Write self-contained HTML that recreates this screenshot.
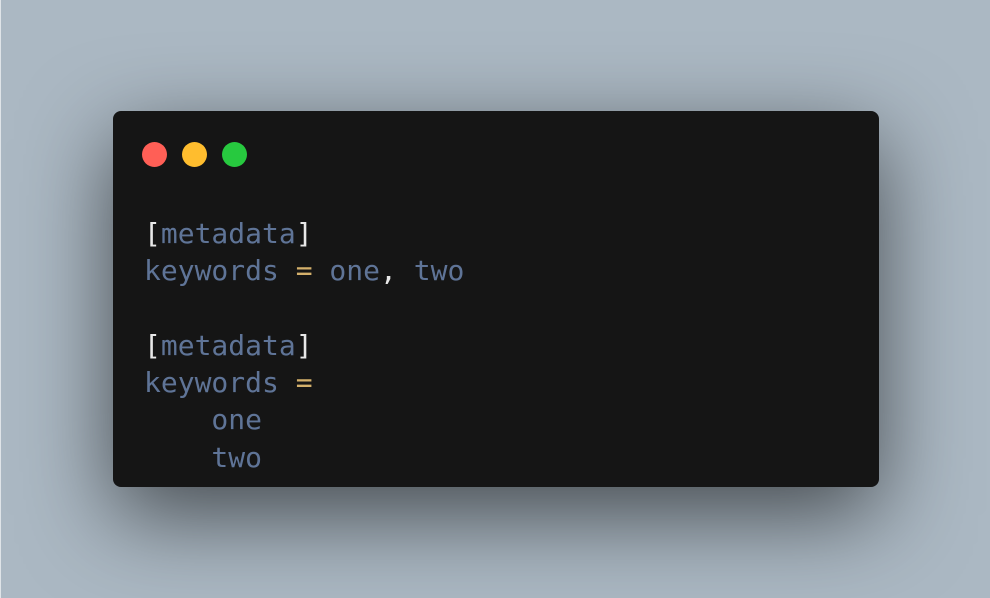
<!DOCTYPE html>
<html><head><meta charset="utf-8"><style>
html,body{margin:0;padding:0}
body{width:990px;height:598px;background:#abb8c3;position:relative;overflow:hidden;border-left:1px solid #dfe4e8;box-sizing:border-box}
.win{position:absolute;left:112px;top:111px;width:766px;height:376px;background:#151515;border-radius:8px;box-shadow:0 28px 90px rgba(0,0,0,0.6)}
.dot{position:absolute;top:31px;width:25px;height:25px;border-radius:50%}
pre{position:absolute;left:31px;top:104px;margin:0;font-family:"DejaVu Sans Mono","Liberation Mono",monospace;font-size:28px;line-height:37.3px;color:#5f7497}
.b{color:#e8e8e8}.e{color:#d4b06b}.c{color:#e8e8e8}
</style></head><body>
<div class="win">
<div class="dot" style="left:29px;background:#ff5f56"></div>
<div class="dot" style="left:69px;background:#ffbd2e"></div>
<div class="dot" style="left:109px;background:#27c93f"></div>
<pre><span class="b">[</span>metadata<span class="b">]</span>
keywords <span class="e">=</span> one<span class="c">,</span> two

<span class="b">[</span>metadata<span class="b">]</span>
keywords <span class="e">=</span>
    one
    two</pre>
</div>
</body></html>
